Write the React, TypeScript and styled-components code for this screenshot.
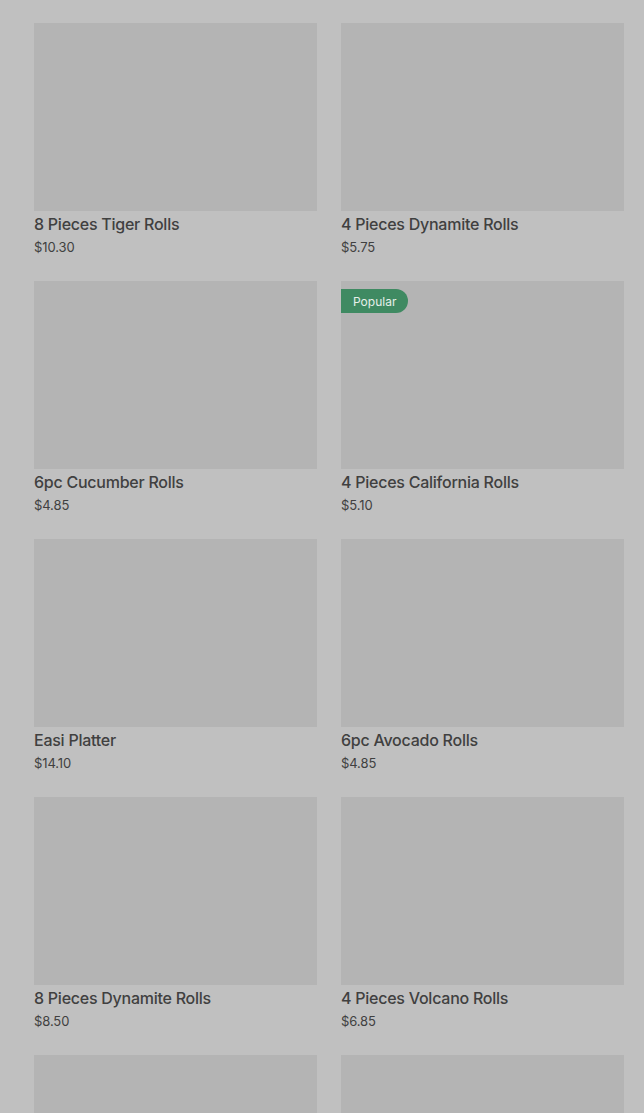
import React from "react";
import styled, { createGlobalStyle } from "styled-components";

const GlobalStyle = createGlobalStyle`
  html, body {
    margin: 0;
    padding: 0;
    background: #c0c0c0;
  }
`;

const Grid = styled.div`
  display: grid;
  grid-template-columns: 283px 283px;
  column-gap: 24px;
  row-gap: 24px;
  padding: 23px 20px 0 34px;
  font-family: Inter, "Liberation Sans", sans-serif;
  color: #404040;
`;

const Card = styled.div`
  display: flex;
  flex-direction: column;
`;

const Picture = styled.div`
  position: relative;
  height: 188px;
  background: #b4b4b4;
`;

const Badge = styled.span`
  position: absolute;
  top: 8px;
  left: 0;
  height: 24px;
  padding: 0 12px;
  display: flex;
  align-items: center;
  background: #3f8a62;
  color: #e6efe9;
  font-size: 12px;
  border-radius: 0 12px 12px 0;
`;

const Title = styled.div`
  margin-top: 3px;
  font-size: 16px;
  line-height: 20px;
  font-weight: 500;
  letter-spacing: -0.25px;
`;

const Price = styled.div`
  margin-top: 4px;
  font-size: 13px;
  line-height: 18px;
  letter-spacing: -0.1px;
  margin-bottom: 1px;
`;

const items = [
  { name: "8 Pieces Tiger Rolls", price: "$10.30" },
  { name: "4 Pieces Dynamite Rolls", price: "$5.75" },
  { name: "6pc Cucumber Rolls", price: "$4.85" },
  { name: "4 Pieces California Rolls", price: "$5.10", badge: "Popular" },
  { name: "Easi Platter", price: "$14.10" },
  { name: "6pc Avocado Rolls", price: "$4.85" },
  { name: "8 Pieces Dynamite Rolls", price: "$8.50" },
  { name: "4 Pieces Volcano Rolls", price: "$6.85" },
  { name: "", price: "" },
  { name: "", price: "" },
];

export default () => {
  return <>
    <GlobalStyle />
    <Grid>
      {items.map((item, i) => (
        <Card key={i}>
          <Picture>
            {item.badge && <Badge>{item.badge}</Badge>}
          </Picture>
          {item.name && <Title>{item.name}</Title>}
          {item.price && <Price>{item.price}</Price>}
        </Card>
      ))}
    </Grid>
  </>
}
